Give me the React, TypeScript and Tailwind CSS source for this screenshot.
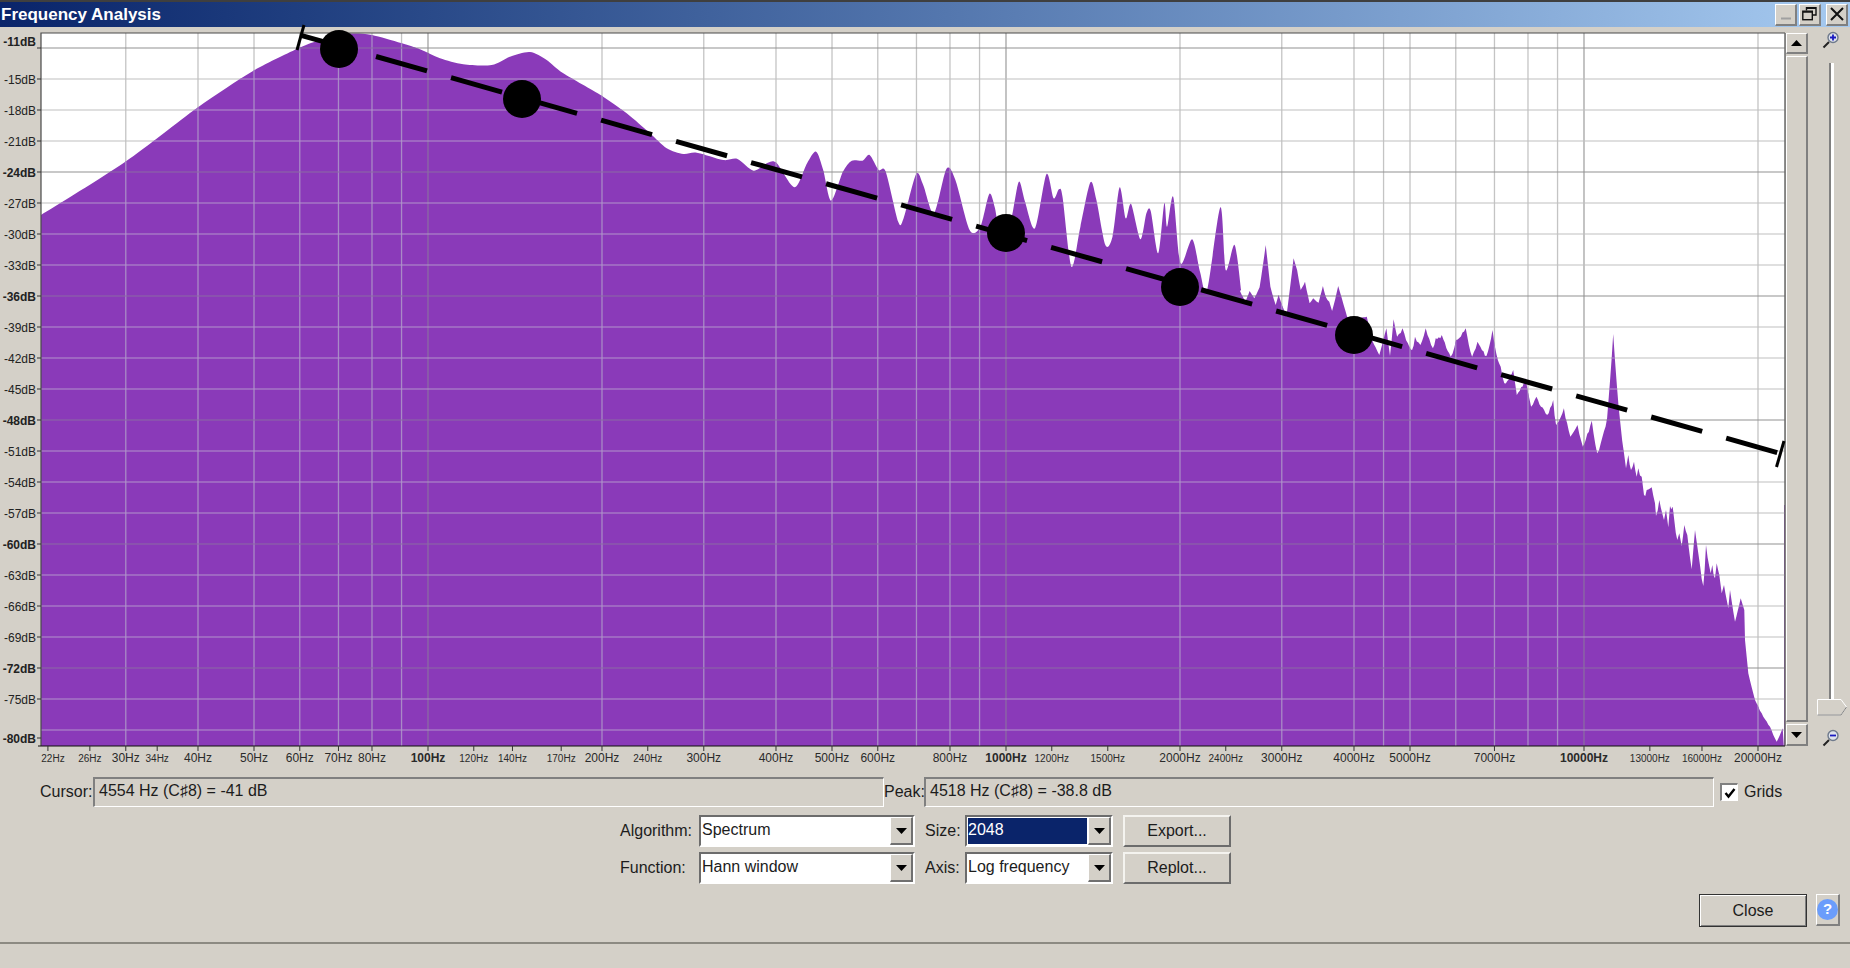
const GRID_F = [30, 40, 50, 60, 70, 80, 90, 100, 200, 300, 400, 500, 600, 700, 800, 900, 1000, 2000, 3000, 4000, 4500, 5000, 6000, 7000, 8000, 9000, 10000, 20000];
const MAJOR_F = [100, 1000, 10000];

const X_LABELS: [number, 's' | 'm' | 'b'][] = [
  [22, 's'], [26, 's'], [30, 'm'], [34, 's'], [40, 'm'], [50, 'm'], [60, 'm'], [70, 'm'], [80, 'm'],
  [100, 'b'], [120, 's'], [140, 's'], [170, 's'], [200, 'm'], [240, 's'], [300, 'm'], [400, 'm'],
  [500, 'm'], [600, 'm'], [800, 'm'], [1000, 'b'], [1200, 's'], [1500, 's'], [2000, 'm'], [2400, 's'],
  [3000, 'm'], [4000, 'm'], [5000, 'm'], [7000, 'm'], [10000, 'b'], [13000, 's'], [16000, 's'], [20000, 'm'],
];

const PLOT = { left: 41, right: 1785, top: 33, bottom: 746 };
const fx = (f: number) => 428 + 578 * Math.log10(f / 100);

// horizontal grid: one line every 3 dB, every 12 dB is darker
const H_LINES = Array.from({ length: 23 }, (_, i) => ({ y: 48 + 31 * i, db: -12 - 3 * i }));
const Y_LABELS = [
  { y: 41, db: -11, bold: true },
  ...H_LINES.slice(1, 22).map((l) => ({ y: l.y, db: l.db, bold: l.db % 12 === 0 })),
  { y: 738, db: -80, bold: true },
];

const pts = (list: number[], ox: number, oy: number, sx: number, sy: number) => {
  const out: [number, number][] = [];
  for (let i = 0; i < list.length; i += 2) out.push([ox + list[i] / sx, oy + list[i + 1] / sy]);
  return out;
};

// smooth low-frequency part, traced from the reference
const smooth: [number, number][] = [
  [41, 215], [125, 162], [197, 108], [253, 71], [299, 48], [320, 40], [338, 35], [355, 33.5], [372, 35], [401, 43],
  ...pts([0, 58, 60, 85, 130, 103, 215, 105, 270, 80, 330, 66, 380, 90, 430, 130, 545, 197, 620, 250, 690, 310, 740, 355, 790, 372, 830, 368], 420, 30, 3, 3),
  ...pts([65, 90, 105, 87, 150, 122, 190, 98, 215, 100, 265, 172, 300, 100, 325, 65, 345, 120, 367, 212, 400, 125, 425, 92, 455, 92, 475, 75, 500, 120, 520, 125, 555, 275, 570, 265, 605, 133, 625, 165, 655, 250, 690, 117, 715, 150, 755, 300, 785, 290, 810, 192, 825, 230, 835, 280, 860, 310, 875, 250, 893, 155, 910, 215, 938, 295, 970, 133, 990, 205, 1005, 178, 1015, 200, 1040, 410, 1065, 290, 1093, 157, 1110, 210, 1135, 345, 1155, 320, 1175, 172, 1192, 265, 1207, 222, 1233, 328, 1250, 250, 1262, 243, 1283, 370, 1300, 220, 1308, 290, 1325, 200, 1345, 400, 1378, 328, 1400, 425, 1420, 480, 1457, 232, 1472, 420, 1497, 345, 1515, 480], 700, 130, 2.8, 3),
];

// noisy high-frequency part
const jagged: [number, number][] = [
  ...pts([0, 183, 15, 215, 27, 183, 40, 205, 55, 172, 72, 45, 85, 170, 100, 225, 108, 195, 130, 260, 150, 85, 160, 120, 170, 180, 182, 155, 195, 220, 205, 205, 220, 218, 232, 168, 240, 200, 250, 215, 258, 243, 275, 168, 285, 205, 300, 260, 320, 265, 355, 260, 370, 330, 390, 375, 410, 295, 420, 378, 430, 268, 440, 320, 455, 295, 470, 340, 482, 360, 490, 320, 505, 345, 520, 295, 540, 355, 548, 325, 565, 315, 590, 380, 605, 330, 632, 295, 650, 380, 665, 335, 690, 378, 707, 300, 718, 372, 730, 410, 740, 460, 765, 420, 775, 495, 800, 445, 815, 530, 830, 500, 860, 555, 877, 510, 885, 585, 907, 535, 925, 620, 945, 585, 960, 650, 985, 572, 1000, 670, 1015, 620, 1028, 565, 1045, 312, 1060, 530], 1240, 230, 2.8, 3),
  ...pts([372, 40, 378, 85, 385, 45, 393, 90, 402, 65, 410, 110, 415, 85, 425, 110, 432, 165, 440, 150, 455, 142, 465, 190, 468, 228, 478, 180, 492, 240, 498, 210, 505, 262, 510, 198, 518, 200, 532, 300, 538, 280, 545, 318, 553, 255, 562, 285, 575, 388, 585, 270, 595, 340, 610, 438, 618, 315, 632, 400, 637, 375, 645, 415, 650, 370, 658, 405, 665, 460, 672, 435, 685, 505, 690, 450, 705, 545, 722, 475, 733, 510, 735, 600, 745, 700, 765, 780, 785, 820, 810, 860, 830, 905, 848, 865, 851, 915], 1500, 440, 3, 3),
];

// fine spectral noise between the traced points, stronger above 2 kHz
const noisy = () => {
  const out: [number, number][] = [];
  for (let i = 0; i < jagged.length - 1; i++) {
    const [x0, y0] = jagged[i];
    const [x1, y1] = jagged[i + 1];
    const steps = Math.max(1, Math.round((x1 - x0) / 1.6));
    for (let s = 0; s < steps; s++) {
      const t = s / steps;
      const x = x0 + (x1 - x0) * t;
      const amp = x < 1400 ? 0.8 : x < 1620 ? 3 : x < 1715 ? 4 : 0.8;
      const wob = s === 0 ? 0 : Math.abs(Math.sin(x * 12.9898) * 43758.5453 % 1) * amp;
      out.push([x, y0 + (y1 - y0) * t + wob]);
    }
  }
  out.push(jagged[jagged.length - 1]);
  return out;
};

const buildArea = () => {
  let d = `M${PLOT.left} ${PLOT.bottom} L${smooth[0][0]} ${smooth[0][1]}`;
  // Catmull-Rom through the traced points keeps the peak heights
  for (let i = 0; i < smooth.length - 1; i++) {
    const p0 = smooth[Math.max(0, i - 1)];
    const p1 = smooth[i];
    const p2 = smooth[i + 1];
    const p3 = smooth[Math.min(smooth.length - 1, i + 2)];
    const k = 0.14;
    const c1x = p1[0] + (p2[0] - p0[0]) * k;
    const c1y = p1[1] + (p2[1] - p0[1]) * k;
    const c2x = p2[0] - (p3[0] - p1[0]) * k;
    const c2y = p2[1] - (p3[1] - p1[1]) * k;
    d += ` C${c1x.toFixed(1)} ${c1y.toFixed(1)} ${c2x.toFixed(1)} ${c2y.toFixed(1)} ${p2[0].toFixed(1)} ${p2[1].toFixed(1)}`;
  }
  for (const [x, y] of noisy()) d += ` L${x.toFixed(1)} ${y.toFixed(1)}`;
  d += ` L1784 746 L1784 505 L1785 505 L1785 746 Z`;
  return d;
};

const AREA = buildArea();
const CIRCLES = [[339, 49], [522, 99], [1006, 233], [1180, 287], [1354, 335]];

function Spectrum() {
  return (
    <svg
      viewBox="0 27 1786 743"
      className="relative z-10 block h-[743px] w-[1786px] shrink-0 overflow-visible"
      fontFamily="'Liberation Sans', sans-serif"
    >
      <defs>
        <clipPath id="area">
          <path d={AREA} />
        </clipPath>
      </defs>
      <rect x={PLOT.left} y={PLOT.top} width={PLOT.right - PLOT.left} height={PLOT.bottom - PLOT.top} fill="#fff" />

      {/* grid on white */}
      {GRID_F.map((f) => (
        <line key={f} x1={fx(f)} x2={fx(f)} y1={PLOT.top} y2={PLOT.bottom} stroke={MAJOR_F.includes(f) ? '#a4a4a4' : '#c4c4c4'} strokeWidth="1.3" />
      ))}
      {H_LINES.map((l) => (
        <line key={l.y} x1={PLOT.left} x2={PLOT.right} y1={l.y} y2={l.y} stroke={l.db % 12 === 0 ? '#929292' : '#c0c0c0'} strokeWidth="1.2" />
      ))}

      <path d={AREA} fill="#8a3ab9" />

      {/* grid over the spectrum */}
      <g clipPath="url(#area)">
        {GRID_F.map((f) => (
          <line key={f} x1={fx(f)} x2={fx(f)} y1={PLOT.top} y2={PLOT.bottom} stroke={MAJOR_F.includes(f) ? '#8a6aa3' : '#a98ac6'} strokeWidth="1.3" />
        ))}
        {H_LINES.map((l) => (
          <line key={l.y} x1={PLOT.left} x2={PLOT.right} y1={l.y} y2={l.y} stroke={l.db % 12 === 0 ? '#8a6aa3' : '#b294cc'} strokeWidth="1.2" />
        ))}
      </g>

      {/* frame */}
      <path d={`M${PLOT.left} ${PLOT.bottom} V${PLOT.top} H${PLOT.right}`} fill="none" stroke="#4a4a4a" strokeWidth="1.2" />
      <line x1={PLOT.right} x2={PLOT.right} y1={PLOT.top} y2={PLOT.bottom} stroke="#6a6a6a" strokeWidth="1.5" />
      <line x1={PLOT.left - 3} x2={PLOT.right} y1={PLOT.bottom} y2={PLOT.bottom} stroke="#111" strokeWidth="1.2" />

      {/* y axis */}
      {Y_LABELS.map((l) => (
        <g key={l.db}>
          <line x1="37" x2={PLOT.left} y1={l.y === 41 ? 48 : l.y} y2={l.y === 41 ? 48 : l.y} stroke="#333" />
          <text x="36" y={l.y + 4.5} textAnchor="end" fontSize="12" fontWeight={l.bold ? 700 : 400} fill="#222">
            {l.db}dB
          </text>
        </g>
      ))}

      {/* x axis */}
      {X_LABELS.map(([f]) => (
        <line key={f} x1={fx(f)} x2={fx(f)} y1={PLOT.bottom} y2={PLOT.bottom + 5} stroke="#333" />
      ))}
      {X_LABELS.map(([f, kind]) => (
        <text
          key={f}
          x={f === 22 ? 53 : fx(f)}
          y={762}
          textAnchor="middle"
          fontSize={kind === 's' ? 10 : 12}
          fontWeight={kind === 'b' ? 700 : 400}
          fill="#2a2a2a"
        >
          {f}Hz
        </text>
      ))}

      {/* reference curve */}
      <line x1="297" y1="50" x2="304" y2="25" stroke="#000" strokeWidth="3" />
      <line x1="1776.5" y1="467" x2="1784" y2="441" stroke="#000" strokeWidth="3" />
      <line x1="301" y1="35.3" x2="1778.5" y2="453" stroke="#000" strokeWidth="5" strokeDasharray="53 24.95" />
      {CIRCLES.map(([cx, cy]) => (
        <circle key={cx} cx={cx} cy={cy} r="19" fill="#000" />
      ))}
    </svg>
  );
}

function Arrow({ up }: { up?: boolean }) {
  return (
    <svg width="11" height="6" viewBox="0 0 11 6">
      <path d={up ? 'M5.5 0L11 6H0Z' : 'M0 0H11L5.5 6Z'} fill="#000" />
    </svg>
  );
}

function Scrollbar() {
  const btn = 'flex w-full items-center justify-center border-t border-l border-t-white border-l-white border-b-2 border-r-2 border-b-[#808080] border-r-[#808080] bg-[#d4d0c8]';
  return (
    <div className="mt-[6px] flex h-[713px] w-[22px] shrink-0 flex-col gap-[2px]">
      <div className={`${btn} h-[21px]`}>
        <Arrow up />
      </div>
      <div className={`${btn} flex-1`} />
      <div className={`${btn} h-[22px]`}>
        <Arrow />
      </div>
    </div>
  );
}

function Magnifier({ minus }: { minus?: boolean }) {
  return (
    <svg width="18" height="18" viewBox="0 0 18 18">
      <path d="M1.5 16.5L7 11" stroke="#222" strokeWidth="2" />
      <circle cx="11" cy="6.5" r="5" fill="#dfe3ec" stroke="#6f7a8c" strokeWidth="1.4" />
      <path d={minus ? 'M8 6.5H14' : 'M8 6.5H14M11 3.5V9.5'} stroke="#1a1ac0" strokeWidth="1.8" />
    </svg>
  );
}

function ZoomSlider() {
  return (
    <div className="flex h-[743px] flex-1 flex-col items-center pl-[6px]">
      <div className="ml-[-2px] mt-[4px] h-[18px]">
        <Magnifier />
      </div>
      <div className="ml-[-1px] mt-[14px] w-[5px] flex-1 border-l-2 border-l-[#808080] bg-white" />
      <svg width="30" height="17" viewBox="0 0 30 17" className="ml-[-1px] shrink-0">
        <path d="M0.5 0.5H24L29.5 8L24 16H0.5Z" fill="#d4d0c8" stroke="#fff" />
        <path d="M0.5 16H24L29.5 8" fill="none" stroke="#808080" />
      </svg>
      <div className="ml-[-2px] mt-[13px] h-[18px]">
        <Magnifier minus />
      </div>
      <div className="h-[23px]" />
    </div>
  );
}

function ReadoutField({ text, width }: { text: string; width: string }) {
  return (
    <div className={`flex h-[30px] items-center border-t-2 border-l-2 border-t-[#808080] border-l-[#808080] border-b border-r border-b-white border-r-white pb-[4px] pl-[4px] text-[16px] ${width}`}>
      {text}
    </div>
  );
}

function Combo({ value, width, selected }: { value: string; width: string; selected?: boolean }) {
  return (
    <div className={`flex h-[32px] items-stretch border-t-2 border-l-2 border-t-[#6c6c6c] border-l-[#6c6c6c] border-b-2 border-r-2 border-b-white border-r-white bg-white ${width}`}>
      <div className="flex min-w-0 flex-1 p-[1px]">
        <div className={`flex flex-1 items-center pb-[3px] ${selected ? 'bg-[#0a246a] text-white' : ''}`}>{value}</div>
      </div>
      <div className="flex w-[23px] items-center justify-center border-t border-l border-t-white border-l-white border-b-2 border-r-2 border-b-[#707070] border-r-[#707070] bg-[#d4d0c8]">
        <Arrow />
      </div>
    </div>
  );
}

function BevelButton({ label, width }: { label: string; width: string }) {
  return (
    <button className={`flex h-[32px] items-center justify-center border-t-2 border-l-2 border-t-[#f4f3ef] border-l-[#f4f3ef] border-b-2 border-r-2 border-b-[#6c6c6c] border-r-[#6c6c6c] bg-[#d4d0c8] ${width}`}>
      {label}
    </button>
  );
}

function WinButton({ children }: { children: React.ReactNode }) {
  return (
    <div className="flex h-[22px] w-[22px] items-center justify-center border-t border-l border-t-white border-l-white border-b-2 border-r-2 border-b-[#808080] border-r-[#808080] bg-[#d4d0c8]">
      {children}
    </div>
  );
}

export default function App() {
  return (
    <div className="flex h-[968px] w-[1850px] flex-col overflow-hidden bg-[#d4d0c8] font-['Liberation_Sans',sans-serif] text-[16px] text-[#1c1c1c]">
      <div className="h-[2px] bg-[#3f3f3f]" />

      {/* title bar */}
      <div className="flex h-[25px] items-center bg-gradient-to-r from-[#0a246a] to-[#a6caf0] pl-[1px] pr-[2px]">
        <span className="flex-1 text-[17px] font-bold text-white">Frequency Analysis</span>
        <div className="flex gap-[2px]">
          <WinButton>
            <svg width="12" height="12" viewBox="0 0 12 12">
              <path d="M1 10.5H11" stroke="#a0a0a0" strokeWidth="2" />
            </svg>
          </WinButton>
          <WinButton>
            <svg width="15" height="14" viewBox="0 0 15 14">
              <path d="M4.5 3.5V0.8H14V8H10.5" fill="none" stroke="#111" strokeWidth="1.4" />
              <rect x="0.8" y="4.2" width="9.5" height="8.5" fill="none" stroke="#111" strokeWidth="1.4" />
              <path d="M1 5H10M5 1.2H14" stroke="#111" strokeWidth="1.6" />
            </svg>
          </WinButton>
          <div className="w-px" />
          <WinButton>
            <svg width="14" height="14" viewBox="0 0 14 14">
              <path d="M1 1L13 13M13 1L1 13" stroke="#111" strokeWidth="2" />
            </svg>
          </WinButton>
        </div>
      </div>

      {/* plot with scrollbar and zoom slider */}
      <div className="flex h-[743px]">
        <Spectrum />
        <Scrollbar />
        <ZoomSlider />
      </div>

      {/* cursor / peak readout */}
      <div className="mt-[7px] flex h-[30px] items-center pl-[40px]">
        <span className="w-[53px]">Cursor:</span>
        <ReadoutField text="4554 Hz (C♯8) = -41 dB" width="w-[791px]" />
        <span className="w-[40px]">Peak:</span>
        <ReadoutField text="4518 Hz (C♯8) = -38.8 dB" width="w-[790px]" />
        <div className="ml-[6px] flex h-[18px] w-[18px] items-center justify-center border-t-2 border-l-2 border-t-[#808080] border-l-[#808080] border-b border-r border-b-white border-r-white bg-white">
          <svg width="12" height="12" viewBox="0 0 12 12">
            <path d="M1.5 6L4.5 9.5L10.5 2" fill="none" stroke="#000" strokeWidth="2.4" />
          </svg>
        </div>
        <span className="ml-[6px]">Grids</span>
      </div>

      {/* algorithm, function, size, axis */}
      <div className="ml-[620px] mt-[8px] grid w-[611px] grid-cols-[79px_216px_50px_148px_auto] items-center gap-y-[5px]">
        <span>Algorithm:</span>
        <Combo value="Spectrum" width="w-[216px]" />
        <span className="ml-[10px]">Size:</span>
        <Combo value="2048" width="w-[148px]" selected />
        <div className="ml-[10px]">
          <BevelButton label="Export..." width="w-[108px]" />
        </div>
        <span>Function:</span>
        <Combo value="Hann window" width="w-[216px]" />
        <span className="ml-[10px]">Axis:</span>
        <Combo value="Log frequency" width="w-[148px]" />
        <div className="ml-[10px]">
          <BevelButton label="Replot..." width="w-[108px]" />
        </div>
      </div>

      {/* close and help */}
      <div className="mt-[10px] flex items-start justify-end gap-[9px] pr-[10px]">
        <button className="flex h-[33px] w-[108px] items-center justify-center border border-[#333] bg-[#d4d0c8] shadow-[inset_1px_1px_0_#fff,inset_-1px_-1px_0_#808080]">
          Close
        </button>
        <div className="flex h-[32px] w-[24px] items-center justify-center border-t border-l border-t-white border-l-white border-b-2 border-r-2 border-b-[#808080] border-r-[#808080]">
          <div className="flex h-[21px] w-[21px] shrink-0 items-center justify-center rounded-full bg-[#6b9dfb] text-[15px] font-bold text-white">?</div>
        </div>
      </div>

      <div className="mt-[15px] border-t-2 border-t-[#8c8a82]" />
    </div>
  );
}
